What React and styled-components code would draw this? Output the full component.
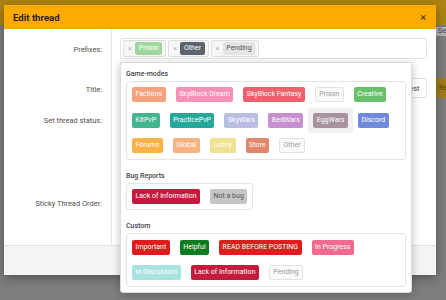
import React from 'react';
import styled, { createGlobalStyle } from 'styled-components';

const GlobalStyle = createGlobalStyle`
  body {
    margin: 0;
    font-family: Roboto, "Liberation Sans", sans-serif;
  }
  * {
    box-sizing: border-box;
  }
`;

const StyledPage = styled.div`
  position: relative;
  width: 446px;
  height: 300px;
  overflow: hidden;
  background-color: #7e7e7e;
`;

const StyledPageTop = styled.div`
  height: 25px;
  background-color: #ab8412;
`;

const StyledPageBar = styled.div`
  display: flex;
  justify-content: flex-end;
  padding-top: 2px;
`;

const StyledSearch = styled.div`
  width: 40px;
  height: 9px;
  margin-right: -30px;
  background-color: #b4b4b4;
  color: #3c3c3c;
  font-size: 7px;
  line-height: 9px;
  padding-left: 2px;
`;

const StyledPageButton = styled.div`
  margin: 42px -30px 0 auto;
  width: 40px;
  height: 20px;
  background-color: #a07c1a;
  color: #5a4410;
  font-size: 7px;
  line-height: 20px;
  padding-left: 3px;
`;

const StyledModal = styled.div`
  position: absolute;
  top: 5px;
  left: 4px;
  width: 432px;
  height: 270px;
  display: flex;
  flex-direction: column;
  background-color: white;
  box-shadow: 0 3px 10px rgba(0, 0, 0, 0.35);
`;

const StyledHeader = styled.div`
  height: 24px;
  padding: 0 10px 0 9px;
  display: flex;
  justify-content: space-between;
  align-items: center;
  background-color: #fdab03;
  color: #2a2208;
`;

const StyledHeading = styled.h4`
  margin: 0;
  font-size: 9.6px;
  font-weight: 700;
`;

const StyledClose = styled.span`
  font-size: 11px;
  line-height: 1;
  color: #3a2e0c;
`;

const StyledBody = styled.div`
  flex: 1;
  display: flex;
  flex-direction: column;
`;

const StyledRow = styled.div`
  display: grid;
  grid-template-columns: 108px 1fr;
  height: ${(p) => (p.$h ? `${p.$h}px` : 'auto')};
  flex: ${(p) => (p.$grow ? 1 : 'none')};
`;

const StyledLabel = styled.div`
  border-right: 1px solid #e6e6e6;
  padding: ${(p) => p.$top}px 9px 0 0;
  text-align: right;
  font-size: 7.45px;
  line-height: 9px;
  color: #505050;
`;

const StyledField = styled.div`
  padding: ${(p) => p.$top}px 9.5px 0 8px;
`;

const StyledInput = styled.div`
  height: ${(p) => p.$h}px;
  border: 1px solid #e2e2e2;
  border-radius: 3px;
  display: flex;
  align-items: center;
  justify-content: ${(p) => (p.$end ? 'flex-end' : 'flex-start')};
  gap: 2px;
  padding: 0 6px 0 2px;
  font-size: 7.45px;
  color: #444;
  white-space: nowrap;
  overflow: hidden;
`;

const StyledChip = styled.div`
  height: 17px;
  display: flex;
  align-items: center;
  gap: 3.5px;
  padding: 0 3px 0 4px;
  border: 1px solid #dedede;
  border-radius: 2px;
  background-color: #f6f6f6;
`;

const StyledRemove = styled.span`
  font-size: 7px;
  color: #b0b0b0;
`;

const StyledFooter = styled.div`
  height: 30px;
  background-color: #f4f4f4;
  border-top: 1px solid #e4e4e4;
`;

const StyledTag = styled.span`
  display: block;
  height: ${(p) => p.$h || 15}px;
  line-height: ${(p) => (p.$h || 15) - (p.$plain ? 2 : 0)}px;
  padding: 0 3.5px;
  border-radius: 2px;
  font-size: 7px;
  white-space: nowrap;
  background-color: ${(p) => (p.$plain ? '#fafafa' : p.$bg)};
  color: ${(p) => (p.$plain ? '#9a9a9a' : p.$fg || 'white')};
  border: ${(p) => (p.$plain ? '1px solid #e2e2e2' : 'none')};
`;

const StyledDropdown = styled.div`
  position: absolute;
  top: 62px;
  left: 120px;
  width: 292px;
  padding: 0 5px 5px 5px;
  background-color: white;
  border: 1px solid #dcdcdc;
  border-radius: 0 0 3px 3px;
  box-shadow: 0 2px 8px rgba(0, 0, 0, 0.25);
`;

const StyledSection = styled.div`
  display: flex;
  flex-direction: column;
  align-items: flex-start;
  padding-top: 7px;

  & + & {
    padding-top: 12px;
  }
`;

const StyledSectionLabel = styled.div`
  font-size: 7px;
  font-weight: 500;
  line-height: 9px;
  color: #454545;
  margin-bottom: 2px;
`;

const StyledGroup = styled.div`
  display: flex;
  flex-wrap: wrap;
  max-width: 100%;
  border: 1px solid #e4e4e4;
  border-radius: 3px;
`;

const StyledOption = styled.div`
  display: flex;
  padding: 5.3px 5px;
  border-radius: 2px;
  background-color: ${(p) => (p.$hover ? '#f1f1f4' : 'transparent')};
`;

const sections = [
  {
    name: 'Game-modes',
    items: [
      { text: 'Factions', bg: '#f5a27c' },
      { text: 'SkyBlock Dream', bg: '#f591b6' },
      { text: 'SkyBlock Fantasy', bg: '#ef606e' },
      { text: 'Prison', plain: true },
      { text: 'Creative', bg: '#68c16a' },
      { text: 'KitPvP', bg: '#41b58e' },
      { text: 'PracticePvP', bg: '#25a89b' },
      { text: 'SkyWars', bg: '#b8bde2' },
      { text: 'BedWars', bg: '#c78fcf' },
      { text: 'EggWars', bg: '#a8929f', hover: true },
      { text: 'Discord', bg: '#7089db' },
      { text: 'Forums', bg: '#fdb146' },
      { text: 'Global', bg: '#f5b381' },
      { text: 'Lobby', bg: '#efe18f' },
      { text: 'Store', bg: '#e0876a' },
      { text: 'Other', plain: true },
    ],
  },
  {
    name: 'Bug Reports',
    items: [
      { text: 'Lack of Information', bg: '#c8183e' },
      { text: 'Not a bug', bg: '#c6c6c6', fg: '#555' },
    ],
  },
  {
    name: 'Custom',
    items: [
      { text: 'Important', bg: '#de1c1c' },
      { text: 'Helpful', bg: '#0f7b1f' },
      { text: 'READ BEFORE POSTING', bg: '#e21c1c' },
      { text: 'In Progress', bg: '#f26b8e' },
      { text: 'In Discussion', bg: '#a8e3df' },
      { text: 'Lack of Information', bg: '#c41c3c' },
      { text: 'Pending', plain: true },
    ],
  },
];

const prefixes = [
  { text: 'Prison', bg: '#9fd79f' },
  { text: 'Other', bg: '#5b6570' },
  { text: 'Pending', bg: '#e4e4e4', fg: '#555' },
];

export default function App() {
  return (
    <StyledPage>
      <GlobalStyle />
      <StyledPageTop />
      <StyledPageBar>
        <StyledSearch>Search</StyledSearch>
      </StyledPageBar>
      <StyledPageButton>Reply</StyledPageButton>

      <StyledModal>
        <StyledHeader>
          <StyledHeading>Edit thread</StyledHeading>
          <StyledClose>×</StyledClose>
        </StyledHeader>
        <StyledBody>
          <StyledRow $h={39}>
            <StyledLabel $top={16}>Prefixes:</StyledLabel>
            <StyledField $top={9}>
              <StyledInput $h={21}>
                {prefixes.map((p) => (
                  <StyledChip key={p.text}>
                    <StyledRemove>×</StyledRemove>
                    <StyledTag $h={13} $bg={p.bg} $fg={p.fg}>
                      {p.text}
                    </StyledTag>
                  </StyledChip>
                ))}
              </StyledInput>
            </StyledField>
          </StyledRow>
          <StyledRow $h={40}>
            <StyledLabel $top={16.5}>Title:</StyledLabel>
            <StyledField $top={10}>
              <StyledInput $h={20} $end>
                Latest
              </StyledInput>
            </StyledField>
          </StyledRow>
          <StyledRow $h={70}>
            <StyledLabel $top={7.5}>Set thread status:</StyledLabel>
            <StyledField $top={0} />
          </StyledRow>
          <StyledRow $grow>
            <StyledLabel $top={20.5}>Sticky Thread Order:</StyledLabel>
            <StyledField $top={0} />
          </StyledRow>
        </StyledBody>
        <StyledFooter />
      </StyledModal>

      <StyledDropdown>
        {sections.map((s) => (
          <StyledSection key={s.name}>
            <StyledSectionLabel>{s.name}</StyledSectionLabel>
            <StyledGroup>
              {s.items.map((item, i) => (
                <StyledOption key={i} $hover={item.hover}>
                  <StyledTag $bg={item.bg} $fg={item.fg} $plain={item.plain}>
                    {item.text}
                  </StyledTag>
                </StyledOption>
              ))}
            </StyledGroup>
          </StyledSection>
        ))}
      </StyledDropdown>
    </StyledPage>
  );
}
